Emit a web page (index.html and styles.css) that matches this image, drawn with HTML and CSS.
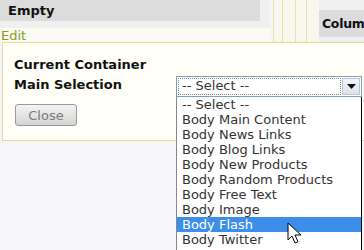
FILE: index.html
```html
<!DOCTYPE html>
<html>
<head>
<meta charset="utf-8">
<link rel="stylesheet" href="styles.css">
</head>
<body>
<div class="top">
  <div class="col-left">
    <div class="hdr">Empty</div>
  </div>
  <div class="edit-row"><a class="edit" href="#">Edit</a></div>
  <div class="seps"><span></span><span></span><span></span><span></span></div>
  <div class="col-right"><div class="hdr2">Colum</div></div>
</div>
<div class="box">
  <div class="labels">
    <div class="lbl">Current Container</div>
    <div class="lbl">Main Selection</div>
    <button class="close">Close</button>
  </div>
  <div class="selwrap">
    <div class="select">
      <div class="focus">-- Select --</div>
      <div class="arrow"><svg width="9" height="5" viewBox="0 0 9 5"><path d="M0 0h9L4.5 5z" fill="#111"/></svg></div>
    </div>
    <ul class="list">
      <li>-- Select --</li>
      <li>Body Main Content</li>
      <li>Body News Links</li>
      <li>Body Blog Links</li>
      <li>Body New Products</li>
      <li>Body Random Products</li>
      <li>Body Free Text</li>
      <li>Body Image</li>
      <li class="sel">Body Flash</li>
      <li>Body Twitter</li>
    </ul>
  </div>
</div>
<svg class="cursor" width="16" height="23" viewBox="0 0 16 23"><path d="M1 1v17l4-4 3 7 3-1.3-3-6.7h6z" fill="#fff" stroke="#000" stroke-width="1" stroke-linejoin="round"/></svg>
</body>
</html>
```
FILE: styles.css
```css
html, body { margin: 0; padding: 0; }
body {
  background: #f6f6f8;
  font-family: "DejaVu Sans", Verdana, sans-serif;
  width: 364px;
  height: 250px;
  overflow: hidden;
  position: relative;
}
.top {
  display: grid;
  grid-template-columns: 270px 49px 1fr;
  grid-template-rows: 28px 14px;
  background: #f0f0f0;
}
.col-left { grid-column: 1; grid-row: 1; }
.hdr {
  width: 252px;
  height: 21px;
  background: #dcdcdc;
  font-weight: bold;
  font-size: 13px;
  line-height: 21px;
  padding-left: 8px;
  color: #111;
}
.edit-row {
  grid-column: 1; grid-row: 2;
  background: #fbfbf3;
}
.edit {
  display: block;
  color: #8a9a2a;
  font-size: 13px;
  line-height: 14px;
  margin-top: 1px;
  text-decoration: none;
  padding-left: 1px;
}
.seps {
  grid-column: 2; grid-row: 1 / span 2;
  display: flex;
  background: #f7f7ee;
}
.seps span { border-left: 1px solid #e2e2b0; }
.seps span:nth-child(1) { margin-left: 3px; width: 8px; }
.seps span:nth-child(2) { width: 12px; }
.seps span:nth-child(3) { width: 10px; }
.seps span:nth-child(4) { width: 12px; }
.col-right {
  grid-column: 3; grid-row: 1 / span 2;
  padding-top: 10px;
}
.hdr2 {
  height: 27px;
  background: #dcdcdc;
  font-weight: bold;
  font-size: 12.5px;
  line-height: 27px;
  padding-left: 3px;
  letter-spacing: -0.3px;
  color: #111;
  white-space: nowrap;
}
.box {
  margin-left: 2px;
  height: 97px;
  border: 1px solid #e0e09c;
  border-right: none;
  background: #fffff7;
  display: flex;
  position: relative;
}
.labels {
  padding: 12px 0 0 11px;
  width: 162px;
}
.lbl {
  font-weight: bold;
  font-size: 13px;
  line-height: 20px;
  color: #111;
  white-space: nowrap;
}
.close {
  margin-top: 9px;
  margin-left: 1px;
  width: 62px;
  height: 22px;
  border: 1px solid #9a9a9a;
  border-radius: 3px;
  background: linear-gradient(#f4f4f4, #d4d4d4);
  color: #7a7a7a;
  font-family: "DejaVu Sans", Verdana, sans-serif;
  font-size: 13px;
  padding: 0;
}
.selwrap {
  padding-top: 33px;
  position: relative;
}
.select {
  width: 182px;
  height: 17px;
  border: 1px solid #7f9db9;
  background: #fff;
  display: flex;
  padding: 1px;
}
.focus {
  flex: 1;
  border: 1px dotted #888;
  font-size: 13px;
  line-height: 13px;
  padding-left: 3px;
  color: #333;
}
.arrow {
  width: 16px;
  border: 1px solid #b8c4d4;
  background: linear-gradient(#f4f6f9, #dde3ea);
  display: flex;
  align-items: center;
  justify-content: center;
  margin-left: 1px;
}
.list {
  position: absolute;
  left: 0;
  top: 54px;
  margin: 0;
  padding: 0;
  list-style: none;
  width: 184px;
  background: #fff;
  border-left: 1px solid #888;
  border-right: 1px solid #000;
  z-index: 2;
  height: 160px;
}
.list li {
  height: 15px;
  line-height: 15px;
  font-size: 13px;
  color: #333;
  padding-left: 5px;
  white-space: nowrap;
}
.list li.sel { background: #3d8ee8; color: #fff; }
.cursor {
  position: absolute;
  left: 287px;
  top: 222px;
  z-index: 3;
}
```
